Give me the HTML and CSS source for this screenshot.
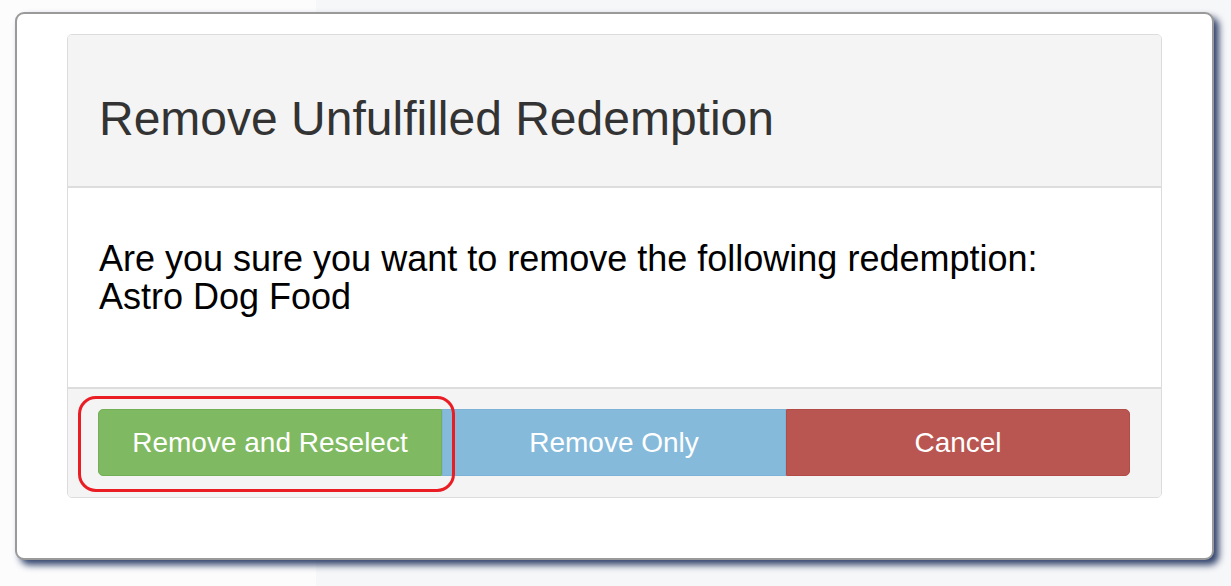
FILE: index.html
```html
<!DOCTYPE html>
<html>
<head>
<meta charset="utf-8">
<link rel="stylesheet" href="styles.css">
</head>
<body>
<div class="page">
  <div class="window">
    <div class="panel">
      <div class="panel-heading">
        <h1 class="title">Remove Unfulfilled Redemption</h1>
      </div>
      <div class="panel-body">
        <p class="message">Are you sure you want to remove the following redemption:<br>Astro Dog Food</p>
      </div>
      <div class="panel-footer">
        <div class="btn-group">
          <button class="btn btn-success">Remove and Reselect</button>
          <button class="btn btn-info">Remove Only</button>
          <button class="btn btn-danger">Cancel</button>
          <div class="highlight"></div>
        </div>
      </div>
    </div>
  </div>
</div>
</body>
</html>
```
FILE: styles.css
```css
* { box-sizing: border-box; }
html, body {
  margin: 0;
  padding: 0;
  width: 1231px;
  height: 586px;
  overflow: hidden;
  font-family: "Liberation Sans", Arial, sans-serif;
}
.page {
  width: 1231px;
  height: 586px;
  padding: 12px 0 0 15px;
  background: linear-gradient(to right, #fcfcfd 0, #fcfcfd 316px, #f6f7f9 316px);
}
.window {
  width: 1199px;
  height: 548px;
  background: #fff;
  border: 2px solid #9a9a9a;
  border-radius: 9px;
  box-shadow: 5px 5px 7px rgba(40, 58, 100, 0.95);
  padding: 20px 50px 0 50px;
}
.panel {
  border: 1px solid #dcdcdc;
  border-radius: 5px;
  overflow: hidden;
}
.panel-heading {
  height: 153px;
  background: #f4f4f4;
  border-bottom: 2px solid #dddddd;
  display: flex;
  align-items: center;
  padding: 16px 31px 0 31px;
}
.title {
  margin: 0;
  font-weight: normal;
  font-size: 48px;
  color: #333333;
  line-height: 1;
}
.panel-body {
  height: 199px;
  background: #fff;
  padding: 0 31px;
  display: flex;
  align-items: center;
}
.message {
  margin: 0;
  font-size: 36px;
  line-height: 38px;
  color: #000;
  padding-bottom: 20px;
}
.panel-footer {
  background: #f4f4f4;
  border-top: 2px solid #dddddd;
  padding: 20px 31px 21px 30px;
}
.btn-group {
  position: relative;
  display: flex;
}
.btn {
  flex: 1 1 0;
  height: 67px;
  border: 1px solid transparent;
  font-family: "Liberation Sans", Arial, sans-serif;
  font-size: 28px;
  color: #fff;
  padding: 0;
}
.btn-success {
  background: #7fb961;
  border-color: #72af56;
  border-radius: 5px 0 0 5px;
}
.btn-info {
  background: #86badb;
  border-color: #7cb3d6;
}
.btn-danger {
  background: #b95651;
  border-color: #b34c47;
  border-radius: 0 5px 5px 0;
}
.highlight {
  position: absolute;
  left: -20px;
  top: -13px;
  width: 377px;
  height: 96px;
  border: 3px solid #ea1c24;
  border-radius: 18px;
  pointer-events: none;
}
```
